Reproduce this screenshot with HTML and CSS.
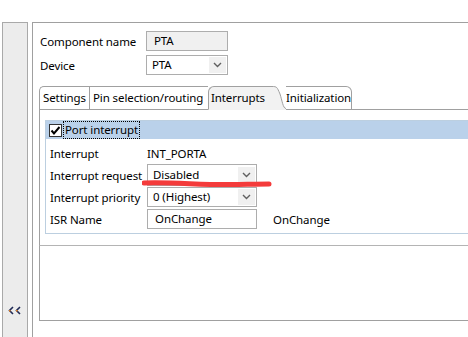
FILE: index.html
```html
<!doctype html>
<html lang="en">
<head>
    <title>Component Inspector</title>
    <meta charset="utf-8" />
    <link rel="stylesheet" href="styles.css">
</head>
<body>
    <div class="app">
        <!-- Collapsed side panel -->
        <aside class="side">
            <div class="side-bar">
                <svg class="collapse" width="14" height="9" viewBox="0 0 14 9">
                    <polyline points="5,1 1.5,4.5 5,8" fill="none" stroke="#1f2a55" stroke-width="1.6"/>
                    <polyline points="12,1 8.5,4.5 12,8" fill="none" stroke="#1f2a55" stroke-width="1.6"/>
                    <rect x="1" y="4" width="1.5" height="1.5" fill="#e07a1e"/>
                    <rect x="8" y="4" width="1.5" height="1.5" fill="#e07a1e"/>
                </svg>
            </div>
        </aside>

        <main class="main">
            <!-- Component fields -->
            <div class="fields">
                <span class="label">Component name</span>
                <div class="field readonly">PTA</div>
                <span class="label">Device</span>
                <div class="field combo">
                    <span>PTA</span>
                    <span class="drop">
                        <svg width="9" height="6" viewBox="0 0 9 6"><polyline points="1,1 4.5,4.5 8,1" fill="none" stroke="#606060" stroke-width="1.4"/></svg>
                    </span>
                </div>
            </div>

            <!-- Tab folder -->
            <div class="folder">
                <div class="tabs">
                    <div class="tab first">Settings</div>
                    <div class="tab second">Pin selection/routing</div>
                    <div class="tab active">Interrupts</div>
                    <svg class="swoosh" width="14" height="24" viewBox="0 0 14 24">
                        <path d="M0,0.5 C5,0.5 5,1 8,8 C10,14 11,22.5 14,22.5 L14,24 L0,24 Z" fill="#f2f2f2"/>
                        <path d="M0,0.5 C5,0.5 5,1 8,8 C10,14 11,22.5 14,22.5" fill="none" stroke="#a0a0a0"/>
                    </svg>
                    <div class="tab last">Initialization</div>
                    <div class="tab-fill"></div>
                </div>

                <div class="page">
                    <div class="group">
                        <div class="group-head">
                            <span class="check">
                                <svg width="11" height="11" viewBox="0 0 11 11"><polyline points="1.5,5.5 4,8.5 9.5,2" fill="none" stroke="#000" stroke-width="2"/></svg>
                            </span>
                            <span class="focus">Port interrupt</span>
                        </div>

                        <div class="rows">
                            <div class="row text-row">
                                <span class="label">Interrupt</span>
                                <span class="value">INT_PORTA</span>
                            </div>
                            <div class="row req-row">
                                <span class="label">Interrupt request</span>
                                <div class="field combo wide tall">
                                    <span>Disabled</span>
                                    <span class="drop">
                                        <svg width="9" height="6" viewBox="0 0 9 6"><polyline points="1,1 4.5,4.5 8,1" fill="none" stroke="#606060" stroke-width="1.4"/></svg>
                                    </span>
                                </div>
                            </div>
                            <div class="row prio-row">
                                <span class="label">Interrupt priority</span>
                                <div class="field combo wide">
                                    <span>0 (Highest)</span>
                                    <span class="drop">
                                        <svg width="9" height="6" viewBox="0 0 9 6"><polyline points="1,1 4.5,4.5 8,1" fill="none" stroke="#606060" stroke-width="1.4"/></svg>
                                    </span>
                                </div>
                            </div>
                            <div class="row isr-row">
                                <span class="label">ISR Name</span>
                                <div class="field wide text">OnChange</div>
                                <span class="value extra">OnChange</span>
                            </div>
                        </div>

                        <!-- Hand-drawn red mark under the request combo -->
                        <svg class="mark" width="132" height="12" viewBox="0 0 132 12">
                            <path d="M2,5 C30,4 60,7 90,6.5 C105,6.3 118,6 127,6" fill="none" stroke="#f43b3b" stroke-width="5" stroke-linecap="round"/>
                        </svg>
                    </div>
                </div>

                <div class="lower"></div>
            </div>
        </main>
    </div>
</body>
</html>
```

FILE: styles.css
```css
body {
    margin: 0;
    height: 337px;
    overflow: hidden;
    font-family: 'Noto Sans', 'Open Sans', sans-serif;
    font-size: 11.5px;
    letter-spacing: -0.1px;
    color: #000;
    background-color: #fff;
}

.app {
    display: flex;
    height: 337px;
}

/* Side panel */
.side {
    width: 32px;
    flex: none;
    padding-top: 22px;
    box-sizing: border-box;
}

.side-bar {
    margin-left: 2px;
    width: 26px;
    height: 330px;
    box-sizing: border-box;
    border: 1px solid #a9a9a9;
    background-color: #ececec;
    display: flex;
    flex-direction: column;
    justify-content: flex-end;
    align-items: center;
    padding-bottom: 36px;
}

/* Main area */
.main {
    flex: 1;
    margin-top: 22px;
    border-top: 1px solid #a0a0a0;
    border-left: 1px solid #a0a0a0;
    min-width: 0;
}

.fields {
    display: grid;
    grid-template-columns: 106px 82px;
    row-gap: 4px;
    align-items: center;
    padding: 8px 0 0 7px;
}

.label {
    white-space: nowrap;
}

.field {
    height: 20px;
    box-sizing: border-box;
    border: 1px solid #adadad;
    background-color: #fff;
    display: flex;
    align-items: center;
    padding-left: 6px;
    line-height: 16px;
}

.field.readonly {
    background-color: #f0f0f0;
    padding-left: 7px;
}

.field.combo {
    padding-left: 5px;
    padding-right: 1px;
    justify-content: space-between;
}

.drop {
    width: 17px;
    height: 16px;
    background-color: #f0f0f0;
    display: flex;
    align-items: center;
    justify-content: center;
}

/* Tab folder */
.folder {
    margin: 11px 0 0 6px;
}

.tabs {
    display: flex;
    height: 24px;
}

.tab {
    flex: none;
    height: 24px;
    box-sizing: border-box;
    border-top: 1px solid #a0a0a0;
    border-bottom: 1px solid #a0a0a0;
    border-left: 1px solid #a0a0a0;
    padding-left: 3px;
    line-height: 21px;
    white-space: nowrap;
    overflow: hidden;
}

.tab.first {
    width: 50px;
    border-top-left-radius: 5px;
}

.tab.second {
    width: 119px;
}

.tab.active {
    width: 64px;
    background-color: #f2f2f2;
    border-bottom-color: #f2f2f2;
    border-top-left-radius: 6px;
    padding-left: 2px;
}

.tab.last {
    width: 66px;
    border-left: none;
    border-right: 1px solid #a0a0a0;
    border-top-right-radius: 6px;
    padding-left: 0;
}

.swoosh {
    flex: none;
    display: block;
}

.tab-fill {
    flex: 1;
    height: 24px;
    box-sizing: border-box;
    border-bottom: 1px solid #a0a0a0;
}

.page {
    height: 136px;
    box-sizing: border-box;
    border-left: 1px solid #a0a0a0;
    border-bottom: 1px solid #b4b4b4;
    padding: 10px 0 0 5px;
}

.group {
    position: relative;
    height: 114px;
    box-sizing: border-box;
    border: 1px solid #bccfe0;
    border-right: none;
}

.group-head {
    height: 18px;
    background-color: #bad1ea;
    display: flex;
    align-items: center;
    padding-left: 3px;
}

.check {
    width: 13px;
    height: 13px;
    box-sizing: border-box;
    border: 1px solid #333;
    background-color: #fff;
    display: flex;
    align-items: center;
    justify-content: center;
}

.focus {
    margin-left: 2px;
    padding: 0 1px;
    outline: 1px dotted #000;
    line-height: 16px;
}

.rows {
    padding: 4px 0 0 4px;
}

.row {
    display: flex;
    align-items: center;
}

.row .label {
    width: 97px;
    flex: none;
}

.text-row {
    height: 20px;
}

.req-row {
    margin-top: 1px;
}

.prio-row {
    margin-top: 1px;
}

.isr-row {
    margin-top: 2px;
}

.field.wide {
    width: 110px;
}

.field.tall {
    height: 22px;
}

.field.text {
    padding-left: 7px;
}

.value.extra {
    margin-left: 16px;
}

.mark {
    position: absolute;
    left: 96px;
    top: 57px;
}

.lower {
    height: 74px;
    border-left: 1px solid #a0a0a0;
    border-bottom: 1px solid #a0a0a0;
}
```
